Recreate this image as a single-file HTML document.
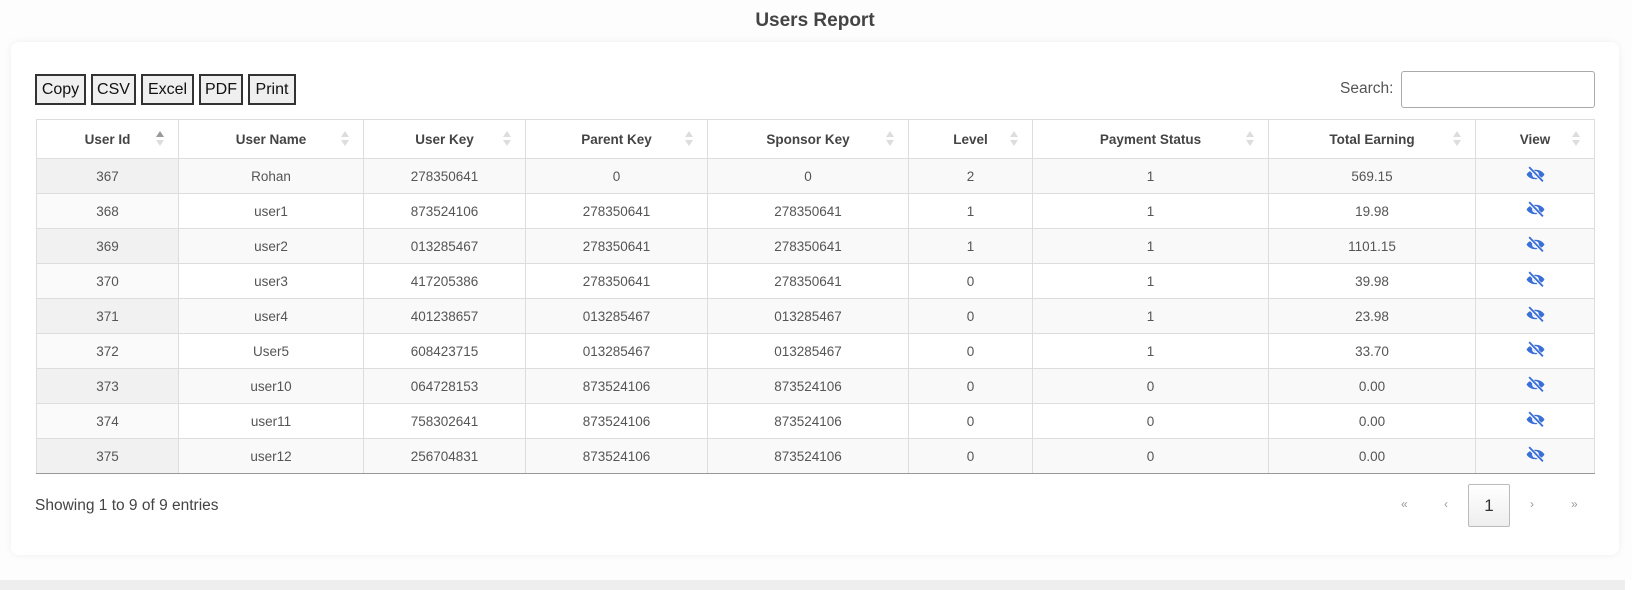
<!DOCTYPE html>
<html><head><style>
*{box-sizing:border-box;margin:0;padding:0}
body{width:1640px;height:590px;background:#fff;font-family:"Liberation Sans",sans-serif;color:#555;position:relative;overflow:hidden}
.band{position:absolute;left:0;top:580px;width:1625px;height:10px;background:#eee}
.wrap{position:absolute;left:0;top:0;width:1632px;height:580px;background:#fdfdfd}
h1{position:absolute;left:0;width:1630px;top:10px;text-align:center;font-size:19px;font-weight:bold;color:#444}
.card{position:absolute;left:11px;top:42px;width:1608px;height:513px;background:#fff;border-radius:8px;box-shadow:0 0 8px rgba(0,0,0,.06)}
.btn{position:absolute;top:74px;height:31px;border:2px solid #333;background:#efefef;font-size:16px;color:#111;text-align:center;line-height:27px}
.search{position:absolute;left:1340px;top:80px;font-size:15.5px;color:#555}
.inp{position:absolute;left:1401px;top:71px;width:194px;height:37px;border:1px solid #aaa;border-radius:3px;background:#fff}
table{position:absolute;left:36px;top:119px;border-collapse:collapse;table-layout:fixed;width:1558px}
th,td{border:1px solid #ddd;text-align:center;font-size:13.5px;position:relative}
th{height:39px;font-weight:bold;color:#444}
td{height:35px;color:#555}
tr.o td{background:#f9f9f9}
tr.o td:first-child{background:#f1f1f1}
tr.e td:first-child{background:#fafafa}
tbody tr:last-child td{border-bottom:1px solid #999}
.s{position:absolute;right:14px;top:11px;width:8px;height:16px}
.s:before{content:"";position:absolute;left:0;top:0;border:4px solid transparent;border-bottom:6px solid #ddd;border-top:0}
.s:after{content:"";position:absolute;left:0;top:9px;border:4px solid transparent;border-top:6px solid #ddd;border-bottom:0}
.s.a:before{border-bottom-color:#999}
.show{position:absolute;left:35px;top:497px;font-size:15.5px;color:#444}
.pg{position:absolute;top:497px;font-size:12px;color:#999}
.cur{position:absolute;left:1468px;top:484px;width:42px;height:43px;border:1px solid #bbb;border-radius:2px;background:linear-gradient(#fff,#eee);font-size:17px;color:#333;text-align:center;line-height:41px}
svg.e{width:19px;height:17px;vertical-align:middle;margin-top:-4px}
</style></head><body>
<div class="wrap"></div>
<div class="band"></div>
<h1>Users Report</h1>
<div class="card"></div>
<div class="btn" style="left:35px;width:51px">Copy</div>
<div class="btn" style="left:91px;width:45px">CSV</div>
<div class="btn" style="left:141px;width:53px">Excel</div>
<div class="btn" style="left:199px;width:44px">PDF</div>
<div class="btn" style="left:248px;width:48px">Print</div>
<div class="search">Search:</div>
<div class="inp"></div>
<svg width="0" height="0" style="position:absolute"><defs><symbol id="eye" viewBox="0 0 18 16"><path d="M0.5 8 C4 2 14 2 17.5 8 C14 14 4 14 0.5 8Z" fill="#3a6fd8"/><circle cx="9" cy="8" r="3.2" fill="#fff"/><circle cx="9" cy="8" r="1.8" fill="#3a6fd8"/><path d="M3 1.5 L15.5 14.5" stroke="#fff" stroke-width="3.4"/><path d="M3 1 L16 14.5" stroke="#3a6fd8" stroke-width="1.8"/></symbol></defs></svg>
<table>
<colgroup><col style="width:142px"><col style="width:185px"><col style="width:162px"><col style="width:182px"><col style="width:201px"><col style="width:124px"><col style="width:236px"><col style="width:207px"><col style="width:119px"></colgroup>
<thead><tr><th>User Id<span class="s a"></span></th><th>User Name<span class="s"></span></th><th>User Key<span class="s"></span></th><th>Parent Key<span class="s"></span></th><th>Sponsor Key<span class="s"></span></th><th>Level<span class="s"></span></th><th>Payment Status<span class="s"></span></th><th>Total Earning<span class="s"></span></th><th>View<span class="s"></span></th></tr></thead>
<tbody>
<tr class="o"><td>367</td><td>Rohan</td><td>278350641</td><td>0</td><td>0</td><td>2</td><td>1</td><td>569.15</td><td><svg class="e"><use href="#eye"/></svg></td></tr>
<tr class="e"><td>368</td><td>user1</td><td>873524106</td><td>278350641</td><td>278350641</td><td>1</td><td>1</td><td>19.98</td><td><svg class="e"><use href="#eye"/></svg></td></tr>
<tr class="o"><td>369</td><td>user2</td><td>013285467</td><td>278350641</td><td>278350641</td><td>1</td><td>1</td><td>1101.15</td><td><svg class="e"><use href="#eye"/></svg></td></tr>
<tr class="e"><td>370</td><td>user3</td><td>417205386</td><td>278350641</td><td>278350641</td><td>0</td><td>1</td><td>39.98</td><td><svg class="e"><use href="#eye"/></svg></td></tr>
<tr class="o"><td>371</td><td>user4</td><td>401238657</td><td>013285467</td><td>013285467</td><td>0</td><td>1</td><td>23.98</td><td><svg class="e"><use href="#eye"/></svg></td></tr>
<tr class="e"><td>372</td><td>User5</td><td>608423715</td><td>013285467</td><td>013285467</td><td>0</td><td>1</td><td>33.70</td><td><svg class="e"><use href="#eye"/></svg></td></tr>
<tr class="o"><td>373</td><td>user10</td><td>064728153</td><td>873524106</td><td>873524106</td><td>0</td><td>0</td><td>0.00</td><td><svg class="e"><use href="#eye"/></svg></td></tr>
<tr class="e"><td>374</td><td>user11</td><td>758302641</td><td>873524106</td><td>873524106</td><td>0</td><td>0</td><td>0.00</td><td><svg class="e"><use href="#eye"/></svg></td></tr>
<tr class="o"><td>375</td><td>user12</td><td>256704831</td><td>873524106</td><td>873524106</td><td>0</td><td>0</td><td>0.00</td><td><svg class="e"><use href="#eye"/></svg></td></tr>
</tbody></table>
<div class="show">Showing 1 to 9 of 9 entries</div>
<div class="pg" style="left:1401px">«</div>
<div class="pg" style="left:1444px">‹</div>
<div class="cur">1</div>
<div class="pg" style="left:1530px">›</div>
<div class="pg" style="left:1571px">»</div>
</body></html>
